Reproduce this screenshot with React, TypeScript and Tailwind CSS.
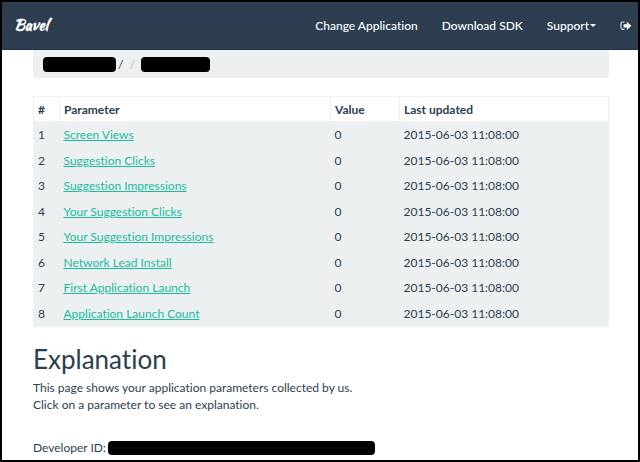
const parameters = [
  "Screen Views",
  "Suggestion Clicks",
  "Suggestion Impressions",
  "Your Suggestion Clicks",
  "Your Suggestion Impressions",
  "Network Lead Install",
  "First Application Launch",
  "Application Launch Count",
];

function SignOutIcon() {
  return (
    <svg viewBox="0 0 12 10" className="h-[10px] w-3" fill="none" aria-hidden="true">
      <path d="M4.5 1H2.6C1.5 1 1 1.6 1 2.6v4.2c0 1 .5 1.6 1.6 1.6h1.9" stroke="#e6eaed" strokeWidth="1.1" />
      <path d="M3.6 3.2h3.2V.7L11.4 4.8 6.8 8.9V6.4H3.6z" fill="#fff" />
    </svg>
  );
}

function Navbar() {
  return (
    <nav className="flex h-12 items-center justify-between border-b border-[#1f3143] bg-[#2c3e50] pr-[6px] pl-3 text-white">
      <a href="#" className="font-[Kaushan_Script,cursive] text-[15px] font-bold">
        Bavel
      </a>
      <div className="flex items-center gap-6 font-medium">
        <a href="#">Change Application</a>
        <a href="#">Download SDK</a>
        <button type="button" className="flex items-center gap-px">
          Support
          <span className="border-x-[3px] border-t-[3px] border-x-transparent border-t-white" />
        </button>
        <a href="#" aria-label="Sign out">
          <SignOutIcon />
        </a>
      </div>
    </nav>
  );
}

export default function App() {
  return (
    <div className="min-h-screen border-2 border-black bg-white font-[Lato,sans-serif] text-[12px] leading-[17px] text-[#2c3e50] [font-variant-ligatures:none]">
      <Navbar />
      <main className="mr-[29px] ml-[31px]">
        <div className="flex h-[28px] items-center rounded-b-[3px] bg-[#ecf0f1] pl-[10px]">
          <span className="h-[15px] w-[73px] rounded bg-black" />
          <span className="ml-[2px]">/</span>
          <span className="ml-[6px] text-[#bdc3c7]">/</span>
          <span className="ml-[6px] h-[15px] w-[69px] rounded bg-black" />
        </div>

        <table className="mt-[18px] h-[231px] w-full table-fixed border-collapse border border-[#eef2f2] text-left">
          <colgroup>
            <col className="w-[26px]" />
            <col className="w-[271px]" />
            <col className="w-[69px]" />
            <col />
          </colgroup>
          <thead>
            <tr className="h-[25px] font-bold">
              <th className="border border-[#eef2f2] px-1 py-0">#</th>
              <th className="border border-[#eef2f2] px-1 py-0">Parameter</th>
              <th className="border border-[#eef2f2] px-1 py-0">Value</th>
              <th className="border border-[#eef2f2] px-1 py-0">Last updated</th>
            </tr>
          </thead>
          <tbody className="bg-[#ecf0f1]">
            {parameters.map((name, index) => (
              <tr key={name}>
                <td className="px-1 py-0">{index + 1}</td>
                <td className="px-1 py-0">
                  <a href="#" className="text-[#18bc9c] underline">
                    {name}
                  </a>
                </td>
                <td className="px-1 py-0">0</td>
                <td className="px-1 py-0">2015-06-03 11:08:00</td>
              </tr>
            ))}
          </tbody>
        </table>

        <h2 className="mt-4 text-[26px] leading-8">Explanation</h2>
        <p className="mt-1">
          This page shows your application parameters collected by us.
          <br />
          Click on a parameter to see an explanation.
        </p>
        <div className="mt-[26px] flex items-center gap-[2px]">
          <span>Developer ID:</span>
          <span className="h-[14px] w-[267px] rounded bg-black" />
        </div>
      </main>
    </div>
  );
}
